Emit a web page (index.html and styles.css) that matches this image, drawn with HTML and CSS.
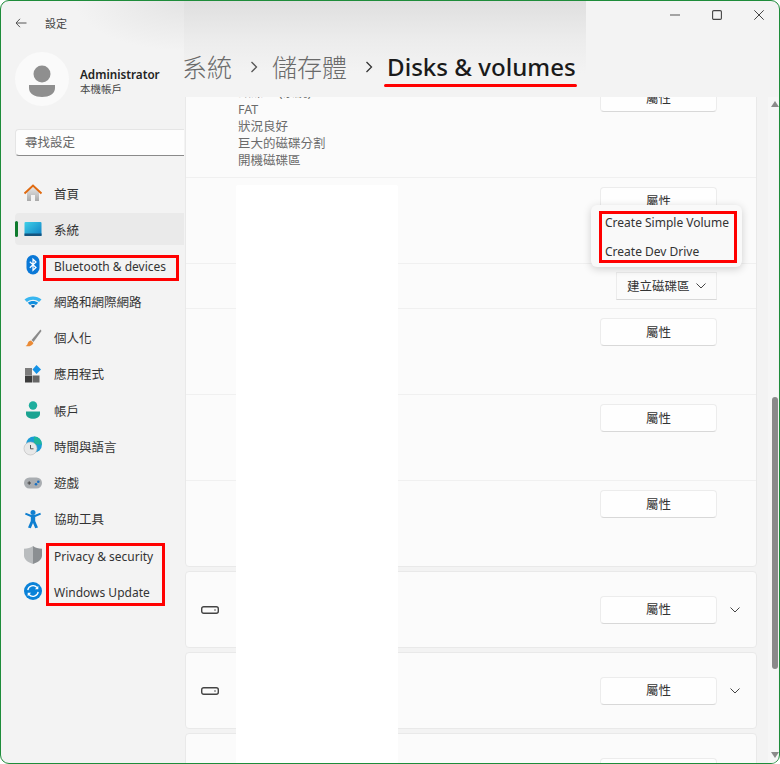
FILE: index.html
```html
<!DOCTYPE html>
<html lang="zh-Hant">
<head>
<meta charset="utf-8">
<title>設定</title>
<link rel="stylesheet" href="styles.css">
</head>
<body>
<div class="window">
  <aside class="sidebar">
    <div class="titlebar">
      <svg class="back" viewBox="0 0 12 10"><path d="M5 .8 1 5l4 4.2M1 5h10.5" fill="none" stroke="#555" stroke-width="1"/></svg>
      <span class="apptitle">設定</span>
    </div>
    <div class="user">
      <div class="avatar">
        <svg viewBox="0 0 54 54" width="54" height="54"><circle cx="27" cy="22" r="8.5" fill="#8f8f8f"/><path d="M14 33h26v3c0 6-6 9-13 9s-13-3-13-9z" fill="#8f8f8f"/></svg>
      </div>
      <div class="userinfo">
        <div class="username">Administrator</div>
        <div class="usertype">本機帳戶</div>
      </div>
    </div>
    <div class="search">尋找設定</div>
    <nav class="nav">
      <a class="item"><svg viewBox="0 0 20 20"><defs><linearGradient id="h" x1="0" y1="0" x2="0" y2="1"><stop offset="0" stop-color="#e8e8e8"/><stop offset="1" stop-color="#a9a9a9"/></linearGradient></defs><path d="M4 9 10 3.500 16 9v9H12v-6H8v6H4z" fill="url(#h)"/><path d="M1.500 10.500 10 2.500l8.500 8" fill="none" stroke="#e06a10" stroke-width="2"/></svg><span>首頁</span></a>
      <a class="item selected"><svg viewBox="0 0 20 20"><defs><linearGradient id="m" x1="0" y1="0" x2="1" y2="1"><stop offset="0" stop-color="#3fd0e8"/><stop offset="1" stop-color="#0f7fc4"/></linearGradient></defs><rect x="1.500" y="3" width="17" height="14" rx="1" fill="url(#m)"/><rect x="1.500" y="14.500" width="17" height="2.500" fill="#14547f"/></svg><span>系統</span></a>
      <a class="item"><svg viewBox="0 0 20 20"><rect x="3.500" y="0" width="13" height="19.500" rx="6.500" fill="#0a78d7"/><path d="M6.800 6.800 13 12.500 10 15.300V4.200l3 2.800-6.200 5.700" fill="none" stroke="#fff" stroke-width="1.200"/></svg><span class="en">Bluetooth &amp; devices</span></a>
      <a class="item"><svg viewBox="0 0 20 20"><path d="M1.500 7.500C6 3.500 14 3.500 18.500 7.500L16 10C12.500 7 7.500 7 4 10z" fill="#38b6f0"/><path d="M4.800 10.800C7.800 8.300 12.200 8.300 15.200 10.800L13 13C11 11.600 9 11.600 7 13z" fill="#0f8fe0"/><path d="M7.800 13.700C9 12.800 11 12.800 12.200 13.700L10 16z" fill="#0a5ea8"/></svg><span>網路和網際網路</span></a>
      <a class="item"><svg viewBox="0 0 20 20"><path d="M17.500 1.500 8.500 12l2 2L18.500 3z" fill="#8a8a8a"/><path d="M8 12.500c-2.500.3-3 2-3.500 3.500-.3 1-1.200 1.700-2 2 2.500.7 6.500.5 8-3z" fill="#ea8a35"/></svg><span>個人化</span></a>
      <a class="item"><svg viewBox="0 0 20 20"><rect x="2" y="4" width="7" height="7" fill="#7c7c7c"/><rect x="2" y="11.500" width="7" height="7" fill="#3c3c3c"/><rect x="9.500" y="11.500" width="7" height="7" fill="#666"/><path d="M13.500 1 18 5.500 13.500 10 9.500 5.500z" fill="#1492e6"/></svg><span>應用程式</span></a>
      <a class="item"><svg viewBox="0 0 20 20"><circle cx="10" cy="5.500" r="4.200" fill="#1fae9e"/><path d="M3 11.500h14v2.500c0 3-3.500 4.800-7 4.800S3 17 3 14z" fill="#1ba391"/></svg><span>帳戶</span></a>
      <a class="item"><svg viewBox="0 0 20 20"><circle cx="11" cy="8.500" r="8" fill="#1a9bd7"/><path d="M11 .5a8 8 0 0 1 8 8h-8z" fill="#1fb59c"/><circle cx="7.500" cy="12.500" r="6.500" fill="#e8e8e8" stroke="#b8b8b8" stroke-width=".6"/><path d="M7.500 9v3.800h3" fill="none" stroke="#555" stroke-width="1"/></svg><span>時間與語言</span></a>
      <a class="item"><svg viewBox="0 0 20 20"><rect x="1" y="4.500" width="18" height="11" rx="5.500" fill="#a9adb1"/><path d="M4.500 10h3.500M6.200 8.300v3.500" stroke="#444" stroke-width="1"/><circle cx="13" cy="11.300" r="1.300" fill="#1a6fc0"/><circle cx="15.300" cy="8.800" r="1.300" fill="#1a6fc0"/></svg><span>遊戲</span></a>
      <a class="item"><svg viewBox="0 0 20 20"><circle cx="10" cy="3.500" r="2.500" fill="#0f7fd0"/><path d="M2 5.500 7.800 8v4L5 18.500 7.800 19.300 10 14l2.200 5.300 2.800-.8L12.200 12V8L18 5.500l-.8-1.800L11.500 6h-3L2.800 3.700z" fill="#0f7fd0"/></svg><span>協助工具</span></a>
      <a class="item"><svg viewBox="0 0 20 20"><path d="M10 1c2.300 1.800 5.500 2.700 9 2.700v6.800c0 4-4 7-9 8.500z" fill="#8b8f92"/><path d="M10 1C7.700 2.800 4.500 3.700 1 3.700v6.800c0 4 4 7 9 8.500z" fill="#b9bcbe"/></svg><span class="en">Privacy &amp; security</span></a>
      <a class="item"><svg viewBox="0 0 20 20"><circle cx="10" cy="10" r="9" fill="#0a82d8"/><path d="M4.800 9.200A5.300 5.300 0 0 1 14 6.500M15.200 10.800A5.300 5.300 0 0 1 6 13.500" fill="none" stroke="#fff" stroke-width="1.300"/><path d="M15.300 4.800v3.400h-3.400zM4.700 15.200v-3.400h3.400z" fill="#fff"/></svg><span class="en">Windows Update</span></a>
    </nav>
  </aside>

  <main class="main">
    <header class="header">
      <div class="controls">
        <svg viewBox="0 0 10 10"><path d="M0 5h10" stroke="#555" stroke-width="1.200"/></svg>
        <svg viewBox="0 0 10 10"><rect x=".6" y=".6" width="8.800" height="8.800" rx="1.200" fill="none" stroke="#444" stroke-width="1.100"/></svg>
        <svg viewBox="0 0 10 10"><path d="M.3.300l9.400 9.400M9.700.300.300 9.700" stroke="#444" stroke-width="1"/></svg>
      </div>
      <h1 class="crumbs">
        <span class="crumb">系統</span>
        <svg class="sep" viewBox="0 0 8 12"><path d="M1.500 1 6.500 6l-5 5" fill="none" stroke="#555" stroke-width="1.300"/></svg>
        <span class="crumb">儲存體</span>
        <svg class="sep" viewBox="0 0 8 12"><path d="M1.500 1 6.500 6l-5 5" fill="none" stroke="#333" stroke-width="1.300"/></svg>
        <span class="current">Disks &amp; volumes</span>
      </h1>
    </header>
    <div class="pane">
      <div class="scroller">
        <section class="card">
          <div class="row first">
            <div class="details">
              <div>磁碟區 (系統)</div>
              <div>FAT</div>
              <div>狀況良好</div>
              <div>巨大的磁碟分割</div>
              <div>開機磁碟區</div>
            </div>
            <button class="btn">屬性</button>
          </div>
          <div class="row"><button class="btn">屬性</button></div>
          <div class="row short"><button class="btn flat">建立磁碟區<svg class="chev small" viewBox="0 0 10 6"><path d="M.5.500 5 5 9.500.500" fill="none" stroke="#444" stroke-width="1"/></svg></button></div>
          <div class="row"><button class="btn">屬性</button></div>
          <div class="row"><button class="btn">屬性</button></div>
          <div class="row"><button class="btn">屬性</button></div>
        </section>
        <section class="card disk">
          <svg class="diskicon" viewBox="0 0 18 8"><rect x=".7" y=".7" width="16.600" height="6.600" rx="2" fill="none" stroke="#444" stroke-width="1.400"/><circle cx="14" cy="4" r=".8" fill="#444"/></svg>
          <button class="btn">屬性</button>
          <svg class="chev" viewBox="0 0 10 6"><path d="M.5.500 5 5 9.500.500" fill="none" stroke="#444" stroke-width="1"/></svg>
        </section>
        <section class="card disk">
          <svg class="diskicon" viewBox="0 0 18 8"><rect x=".7" y=".7" width="16.600" height="6.600" rx="2" fill="none" stroke="#444" stroke-width="1.400"/><circle cx="14" cy="4" r=".8" fill="#444"/></svg>
          <button class="btn">屬性</button>
          <svg class="chev" viewBox="0 0 10 6"><path d="M.5.500 5 5 9.500.500" fill="none" stroke="#444" stroke-width="1"/></svg>
        </section>
        <section class="card disk">
          <svg class="diskicon" viewBox="0 0 18 8"><rect x=".7" y=".7" width="16.600" height="6.600" rx="2" fill="none" stroke="#444" stroke-width="1.400"/><circle cx="14" cy="4" r=".8" fill="#444"/></svg>
          <button class="btn">屬性</button>
          <svg class="chev" viewBox="0 0 10 6"><path d="M.5.500 5 5 9.500.500" fill="none" stroke="#444" stroke-width="1"/></svg>
        </section>
      </div>
      <div class="scrollbar">
        <svg viewBox="0 0 8 6"><path d="M4 0 8 6H0z" fill="#8a8a8a"/></svg>
        <div class="track"><div class="thumb"></div></div>
        <svg viewBox="0 0 8 6"><path d="M0 0h8L4 6z" fill="#8a8a8a"/></svg>
      </div>
    </div>
  </main>

  <div class="redaction"></div>
  <div class="menu">
    <div class="menuitem">Create Simple Volume</div>
    <div class="menuitem">Create Dev Drive</div>
  </div>
  <div class="mark mark-heading"></div>
  <div class="mark mark-bt"></div>
  <div class="mark mark-privacy"></div>
  <div class="mark mark-menu"></div>
</div>
</body>
</html>
```
FILE: styles.css
```css
* { box-sizing: border-box; }
html, body { margin: 0; padding: 0; background: #fff; }
body {
  font-family: "Noto Sans", "Noto Sans CJK TC", sans-serif;
  font-size: 12.5px;
  color: #333;
}
.window {
  position: relative;
  width: 780px;
  height: 764px;
  border: 1px solid #1e8c3a;
  border-radius: 9px;
  overflow: hidden;
  display: grid;
  grid-template-columns: 183px 1fr;
  background: #f3f3f3;
}
.sidebar {
  display: flex;
  flex-direction: column;
  padding-left: 14px;
  background: radial-gradient(ellipse at 100% 0, #e4e4e4, #f3f3f3 70%) no-repeat 100% 0 / 110px 50px;
}
.titlebar {
  height: 44px;
  display: flex;
  align-items: center;
}
.back { width: 12px; height: 10px; }
.apptitle { font-size: 11px; margin-left: 18px; color: #444; }
.user { display: flex; align-items: center; gap: 11px; margin-top: 7px; }
.avatar {
  width: 54px;
  height: 54px;
  border-radius: 50%;
  background: #fafafa;
}
.avatar svg { display: block; }
.username { font-size: 11.7px; font-weight: 600; line-height: 16px; color: #222; margin-top: 3px; }
.usertype { font-size: 10.5px; line-height: 14px; color: #444; }
.search {
  height: 27px;
  margin-top: 23px;
  padding: 0 9px;
  line-height: 26px;
  background: #fdfdfd;
  border: 1px solid #e5e5e5;
  border-bottom: 1px solid #8a8a8a;
  border-right: 0;
  border-radius: 4px 0 0 4px;
  color: #666;
}
.nav { display: flex; flex-direction: column; gap: 4.2px; margin-top: 21px; }
.item {
  position: relative;
  display: flex;
  align-items: center;
  height: 32px;
  padding-left: 8px;
  border-radius: 4px 0 0 4px;
  color: #333;
}
.item svg { width: 20px; height: 20px; flex: none; }
.item span { margin-left: 11px; }
.item .en { font-size: 12px; padding-top: 3px; }
.selected { background: #eaeaea; }
.selected::before {
  content: "";
  position: absolute;
  left: 0;
  top: 8px;
  width: 2.500px;
  height: 16px;
  border-radius: 2px;
  background: #0f7b2e;
}
.main { display: flex; flex-direction: column; min-width: 0; min-height: 0; }
.header {
  height: 96px;
  flex: none;
  display: flex;
  flex-direction: column;
  background: linear-gradient(#dfdfdf, #ececec 40%, #f3f3f3 75%) no-repeat 0 0 / 402px 100%;
}
.controls {
  display: flex;
  justify-content: flex-end;
  gap: 32px;
  padding: 9px 15px 0 0;
  height: 48px;
  flex: none;
}
.controls svg { width: 10px; height: 10px; }
.crumbs {
  margin: 0 0 0 -2px;
  display: flex;
  align-items: center;
  font-size: 25px;
  font-weight: 400;
  line-height: 36px;
}
.crumb { color: #6a6a6a; font-weight: 300; }
.sep { width: 8px; height: 12px; margin: 0 14px 0 18px; }
.current { color: #1a1a1a; font-weight: 500; font-size: 24.1px; }
.pane { flex: 1; display: flex; min-height: 0; }
.scroller {
  width: 572px;
  margin-left: 1px;
  height: 667px;
  overflow: hidden;
  flex: none;
}
.card {
  background: #fbfbfb;
  border: 1px solid #e9e9e9;
  border-radius: 4px;
  margin-bottom: 4px;
}
.card:first-child { margin-top: -23px; }
.row {
  height: 86px;
  padding: 9px 39px 0 0;
  display: flex;
  justify-content: flex-end;
  align-items: flex-start;
  border-bottom: 1px solid #f0f0f0;
}
.row:last-child { border-bottom: 0; height: 85px; }
.first { height: 103px; justify-content: space-between; padding-left: 52px; }
.short { height: 45px; padding-top: 8px; }
.details { line-height: 17px; color: #6b6b6b; }
.btn {
  width: 117px;
  height: 28px;
  flex: none;
  font: inherit;
  color: #333;
  background: #fefefe;
  border: 1px solid #ececec;
  border-bottom-color: #d8d8d8;
  border-radius: 4px;
  padding: 0 0 2px;
}
.flat {
  width: 101px;
  background: #fbfbfb;
  border-radius: 0;
  display: flex;
  align-items: center;
  padding: 0 0 2px 10px;
}
.chev { width: 10px; height: 6px; flex: none; }
.small { margin-left: 6px; margin-top: 2px; }
.disk {
  height: 77px;
  display: flex;
  align-items: center;
  padding: 0 15px;
}
.diskicon { width: 18px; height: 8px; margin-right: 381px; }
.disk .chev { margin-left: 13px; }
.scrollbar {
  width: 10px;
  margin-left: 11px;
  display: flex;
  flex-direction: column;
  align-items: center;
  padding: 4px 0 5px 3px;
  background: #f6f6f6;
}
.scrollbar svg { width: 8px; height: 6px; flex: none; }
.track { flex: 1; width: 6px; padding-top: 290px; }
.thumb { height: 272px; background: #8a8a8a; border-radius: 3px; }
.redaction {
  position: absolute;
  left: 235px;
  top: 184px;
  width: 162px;
  height: 590px;
  background: #fff;
  border-radius: 2px;
}
.menu {
  position: absolute;
  left: 590px;
  top: 204px;
  width: 151px;
  height: 62px;
  padding: 4px 0 0 14px;
  background: #f9f9f9;
  border-radius: 6px;
  box-shadow: 0 2px 8px rgba(0, 0, 0, .18);
  color: #333;
  font-size: 12px;
}
.menuitem { height: 29px; line-height: 28px; white-space: nowrap; }
.mark { position: absolute; border: 3px solid #f00; }
.mark-heading { left: 383px; top: 83px; width: 193px; height: 0; border-width: 3px 0 0; border-radius: 2px; }
.mark-bt { left: 42px; top: 254px; width: 136px; height: 26px; }
.mark-privacy { left: 45px; top: 542px; width: 119px; height: 63px; }
.mark-menu { left: 598px; top: 210px; width: 138px; height: 52px; }
```
